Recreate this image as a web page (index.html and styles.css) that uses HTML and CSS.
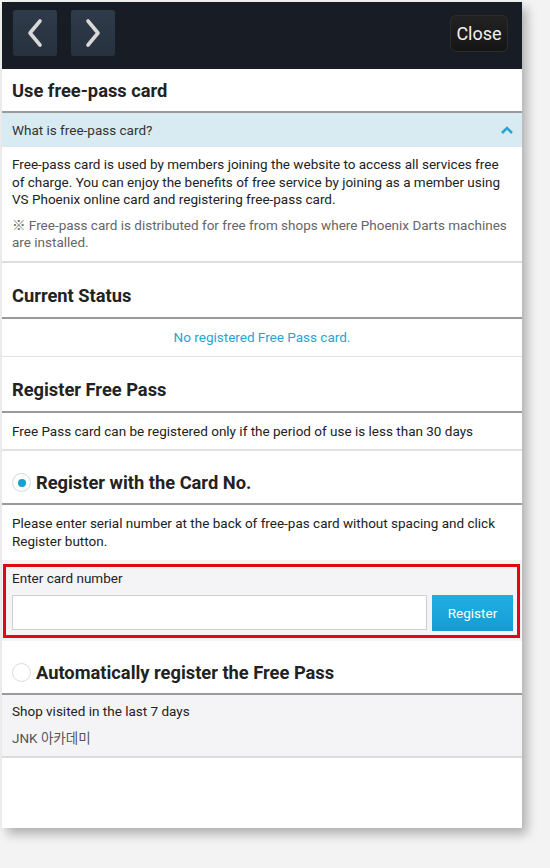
FILE: index.html
```html
<!DOCTYPE html>
<html lang="en">
<head>
<meta charset="utf-8">
<title>Use free-pass card</title>
<link rel="stylesheet" href="styles.css">
</head>
<body>
<div class="screen">
  <header class="topbar">
    <div class="nav">
      <button class="navbtn" aria-label="Back">
        <svg width="20" height="30" viewBox="0 0 20 30"><path d="M15 3 L5 15 L15 27" fill="none" stroke="#d8d8d8" stroke-width="3.6" stroke-linecap="round" stroke-linejoin="round"/></svg>
      </button>
      <button class="navbtn" aria-label="Forward">
        <svg width="20" height="30" viewBox="0 0 20 30"><path d="M5 3 L15 15 L5 27" fill="none" stroke="#d8d8d8" stroke-width="3.6" stroke-linecap="round" stroke-linejoin="round"/></svg>
      </button>
    </div>
    <button class="close">Close</button>
  </header>

  <h2 class="title first">Use free-pass card</h2>
  <div class="accordion">
    <span>What is free-pass card?</span>
    <svg width="14" height="10" viewBox="0 0 14 10"><path d="M2 8 L7 3 L12 8" fill="none" stroke="#2aa3d3" stroke-width="2.6"/></svg>
  </div>
  <div class="desc">
    <p>Free-pass card is used by members joining the website to access all services free of charge. You can enjoy the benefits of free service by joining as a member using VS Phoenix online card and registering free-pass card.</p>
    <p class="note">※ Free-pass card is distributed for free from shops where Phoenix Darts machines are installed.</p>
  </div>

  <h2 class="title">Current Status</h2>
  <div class="status">No registered Free Pass card.</div>

  <h2 class="title">Register Free Pass</h2>
  <div class="info">Free Pass card can be registered only if the period of use is less than 30 days</div>

  <h2 class="title radio-title"><span class="radio checked"></span>Register with the Card No.</h2>
  <div class="desc2">Please enter serial number at the back of free-pas card without spacing and click Register button.</div>
  <div class="graywrap">
    <div class="cardbox">
      <label class="label" for="cardno">Enter card number</label>
      <div class="row">
        <input id="cardno" class="input" type="text">
        <button class="register">Register</button>
      </div>
    </div>
  </div>

  <h2 class="title radio-title"><span class="radio"></span>Automatically register the Free Pass</h2>
  <div class="shops">
    <div class="shops-label">Shop visited in the last 7 days</div>
    <div class="shop">JNK 아카데미</div>
  </div>
</div>
</body>
</html>
```

FILE: styles.css
```css
* { box-sizing: border-box; }
html, body { margin: 0; padding: 0; }
body {
  background: #f3f3f3;
  font-family: Roboto, "Noto Sans CJK KR", sans-serif;
  color: #222;
  width: 550px;
  height: 868px;
  overflow: hidden;
}
.screen {
  margin: 2px 0 0 2px;
  width: 520px;
  height: 826px;
  background: #fff;
  box-shadow: 5px 6px 10px rgba(0,0,0,0.28);
  overflow: hidden;
}
.topbar {
  height: 67px;
  background: #181d25;
  display: flex;
  align-items: flex-start;
  justify-content: space-between;
  padding: 8px 14px 0 11px;
}
.nav { display: flex; gap: 14px; }
.navbtn {
  width: 44px;
  height: 46px;
  border: none;
  border-radius: 3px;
  background: linear-gradient(#2f3b4b, #27313e);
  display: flex;
  align-items: center;
  justify-content: center;
  padding: 0;
}
.close {
  margin-top: 5px;
  width: 58px;
  height: 37px;
  border: 1px solid #2c2c2c;
  border-radius: 6px;
  background: linear-gradient(#222, #151515);
  color: #f2f2f2;
  font-family: Roboto, sans-serif;
  font-size: 18px;
  padding: 0;
}
.title {
  margin: 0;
  height: 56px;
  padding: 12px 10px 0;
  display: flex;
  align-items: center;
  font-size: 18.3px;
  font-weight: 700;
  color: #222;
  border-bottom: 2px solid #9a9a9a;
}
.title.first { height: 44px; padding-top: 0; }
.accordion {
  height: 34px;
  background: #d9ebf2;
  display: flex;
  align-items: center;
  justify-content: space-between;
  padding: 0 8px 0 10px;
  font-size: 13.5px;
  color: #333;
}
.desc {
  padding: 9px 10px 9px;
  font-size: 13.5px;
  line-height: 17.5px;
  color: #222;
  border-bottom: 2px solid #dedede;
}
.desc p { margin: 0; }
.desc .note { margin-top: 8px; color: #666; }
.status {
  height: 38px;
  display: flex;
  align-items: center;
  justify-content: center;
  font-size: 13.5px;
  color: #2aa3d3;
  border-bottom: 1px solid #e2e2e2;
}
.info {
  height: 38px;
  display: flex;
  align-items: center;
  padding: 0 10px;
  font-size: 13.5px;
  color: #222;
  border-bottom: 2px solid #e2e2e2;
}
.radio-title { height: 54px; padding-top: 12px; }
.radio {
  width: 19px;
  height: 19px;
  border-radius: 50%;
  border: 1.5px solid #c9dde6;
  background: #fff;
  margin-right: 5px;
  display: inline-flex;
  align-items: center;
  justify-content: center;
  flex: none;
}
.radio.checked::after {
  content: "";
  width: 8px;
  height: 8px;
  border-radius: 50%;
  background: #1a9fd4;
}
.radio:not(.checked) { border-color: #dcdcdc; }
.desc2 {
  padding: 9px 10px 10px;
  font-size: 13.5px;
  line-height: 18px;
  color: #222;
}
.graywrap {
  background: #f4f4f7;
  padding: 4px 0 3px;
}
.cardbox {
  border: 3px solid #e30613;
  margin: 0 2px 0 1px;
  padding: 2px 4px 4px 6px;
}
.label {
  display: block;
  font-size: 13.5px;
  color: #222;
  line-height: 18px;
  margin-bottom: 8px;
}
.row { display: flex; gap: 5px; align-items: center; }
.input {
  flex: 1;
  height: 35px;
  border: 1px solid #cfcfcf;
  background: #fff;
  margin: 0;
}
.register {
  width: 81px;
  height: 36px;
  border: none;
  background: linear-gradient(#22aee3, #139cd4);
  color: #fff;
  font-family: Roboto, sans-serif;
  font-size: 13.5px;
  padding: 0;
}
.shops {
  background: #f4f4f7;
  padding: 8px 10px 9px;
  border-bottom: 2px solid #dcdcdc;
  font-size: 13.5px;
}
.shops-label { line-height: 17px; color: #222; }
.shop { margin-top: 10px; line-height: 17px; color: #555; }
```
